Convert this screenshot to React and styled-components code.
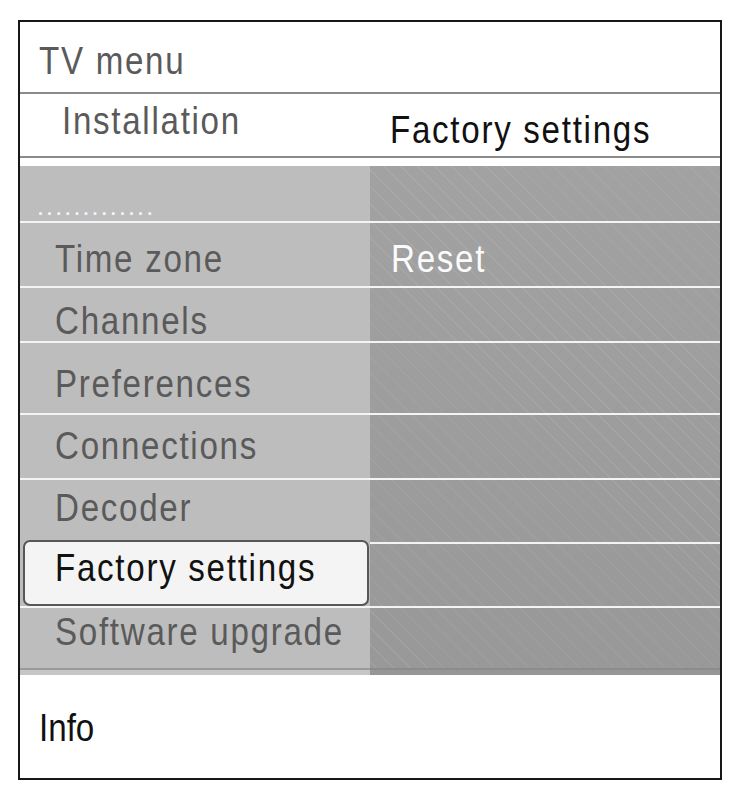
import React from "react";
import styled, { createGlobalStyle } from "styled-components";

const GlobalStyle = createGlobalStyle`
  html, body {
    margin: 0;
    padding: 0;
    background: #fff;
  }
  body {
    font-family: "Liberation Sans", Arial, sans-serif;
  }
`;

const Frame = styled.div`
  margin: 20px 0 0 18px;
  width: 700px;
  border: 2px solid #161616;
  background: #fff;
`;

/* condensed TV-menu lettering: Liberation Sans squeezed horizontally */
const Label = styled.span`
  display: inline-block;
  font-size: 39px;
  line-height: 39px;
  letter-spacing: ${(p) => p.$spacing ?? 2}px;
  color: ${(p) => p.$color || "#5a5a5a"};
  white-space: nowrap;
  transform: scaleX(0.85);
  transform-origin: left top;
`;

const TitleBar = styled.div`
  height: 72px;
  padding: 19px 0 0 19px;
  box-sizing: border-box;
  border-bottom: 2px solid #8a8a8a;
`;

const Breadcrumb = styled.div`
  display: grid;
  grid-template-columns: 350px 350px;
  height: 62px;
  border-bottom: 2px solid #8a8a8a;
  margin-bottom: 8px;
`;

const CrumbCell = styled.div`
  padding-top: ${(p) => p.$top}px;
  padding-left: ${(p) => p.$left}px;
`;

const Panel = styled.div`
  display: flex;
  flex-direction: column;
`;

const Row = styled.div`
  display: grid;
  grid-template-columns: 350px 350px;
  height: ${(p) => p.$h}px;
`;

const LeftCell = styled.div`
  background: #bdbdbd;
  box-sizing: border-box;
  border-top: ${(p) => (p.$sep ? "2px solid #f4f4f4" : "none")};
  padding: ${(p) => p.$top}px 0 0 ${(p) => p.$left ?? 35}px;
`;

const RightCell = styled.div`
  box-sizing: border-box;
  border-top: ${(p) => (p.$sep ? "2px solid #f4f4f4" : "none")};
  padding: ${(p) => p.$top}px 0 0 21px;
  background-color: #9e9e9e;
  background-image: repeating-linear-gradient(
    45deg,
    rgba(255, 255, 255, 0) 0px,
    rgba(255, 255, 255, 0) 11px,
    rgba(255, 255, 255, 0.08) 11px,
    rgba(255, 255, 255, 0.08) 12px
  ),
  linear-gradient(180deg, #a5a5a5 0%, #969696 100%);
  background-attachment: fixed;
`;

const SelectedCell = styled.div`
  background: #bdbdbd;
  padding: 0 1px 0 3px;
`;

const SelectedBox = styled.div`
  margin-top: -2px;
  height: 66px;
  box-sizing: border-box;
  border: 2px solid #575757;
  border-radius: 7px;
  background: #f4f4f4;
  padding: ${(p) => p.$top}px 0 0 30px;
`;

const Dots = styled.div`
  padding-top: 34px;
  font-size: 18px;
  font-weight: bold;
  letter-spacing: 4.1px;
  color: #f2f4ff;
  line-height: 18px;
`;

const BottomEdge = styled.div`
  display: grid;
  grid-template-columns: 350px 350px;
  height: 7px;
`;

const EdgeLeft = styled.div`
  background: #c6c6c6;
  border-top: 2px solid #9a9a9a;
`;

const EdgeRight = styled.div`
  background: #969696;
  border-top: 2px solid #8c8c8c;
`;

const InfoBar = styled.div`
  height: 103px;
  box-sizing: border-box;
  padding: 33px 0 0 19px;
`;

const rows = [
  { label: "Time zone", h: 65, top: 16, right: "Reset" },
  { label: "Channels", h: 55, top: 13 },
  { label: "Preferences", h: 72, top: 21 },
  { label: "Connections", h: 65, top: 11 },
  { label: "Decoder", h: 64, top: 8 },
  { label: "Factory settings", h: 64, top: 5, selected: true },
  { label: "Software upgrade", h: 62, top: 4 },
];

export default function App() {
  return (
    <>
      <GlobalStyle />
      <Frame>
        <TitleBar>
          <Label>TV menu</Label>
        </TitleBar>
        <Breadcrumb>
          <CrumbCell $top={7} $left={42}>
            <Label>Installation</Label>
          </CrumbCell>
          <CrumbCell $top={16} $left={20}>
            <Label $color="#111">Factory settings</Label>
          </CrumbCell>
        </Breadcrumb>
        <Panel>
          <Row $h={55}>
            <LeftCell $top={0} $left={18}>
              <Dots>.............</Dots>
            </LeftCell>
            <RightCell $top={0} />
          </Row>
          {rows.map((r) => (
            <Row key={r.label} $h={r.h}>
              {r.selected ? (
                <SelectedCell>
                  <SelectedBox $top={r.top + 1}>
                    <Label $color="#111">{r.label}</Label>
                  </SelectedBox>
                </SelectedCell>
              ) : (
                <LeftCell $sep $top={r.top}>
                  <Label>{r.label}</Label>
                </LeftCell>
              )}
              <RightCell $sep $top={r.top}>
                {r.right && <Label $color="#fbfbfb">{r.right}</Label>}
              </RightCell>
            </Row>
          ))}
          <BottomEdge>
            <EdgeLeft />
            <EdgeRight />
          </BottomEdge>
        </Panel>
        <InfoBar>
          <Label $color="#111" $spacing={0}>Info</Label>
        </InfoBar>
      </Frame>
    </>
  );
}
